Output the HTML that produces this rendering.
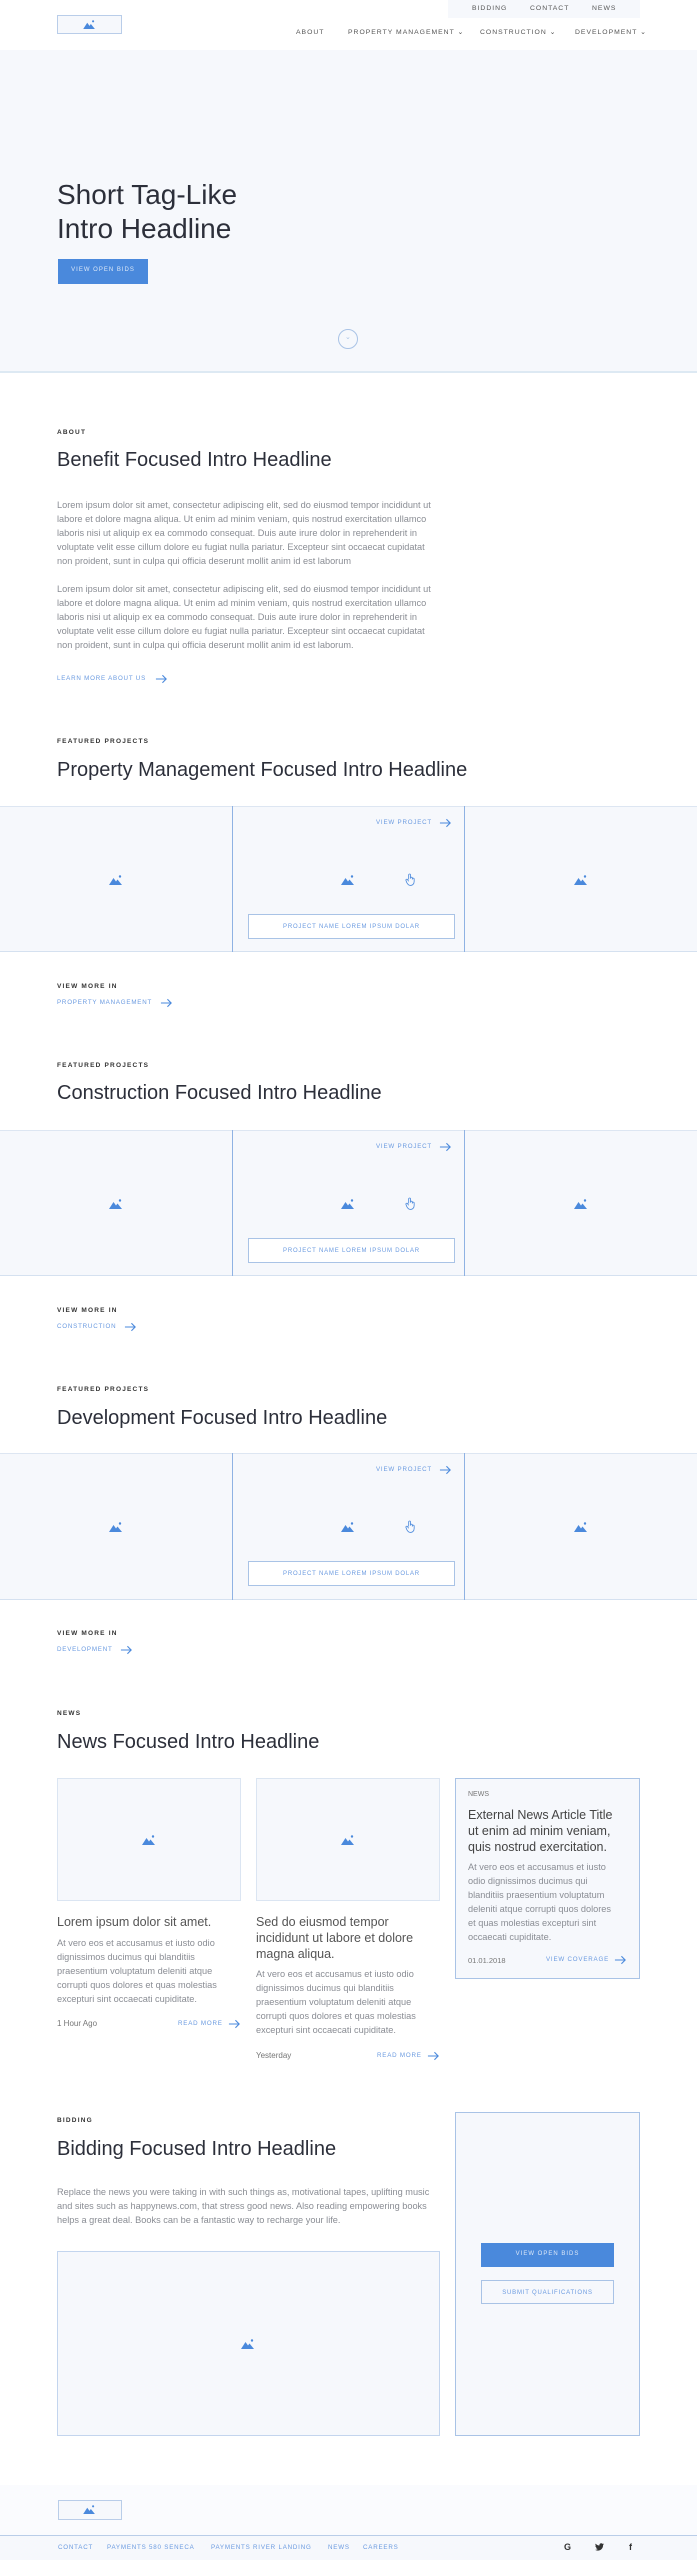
<!DOCTYPE html>
<html><head><meta charset="utf-8">
<style>
*{margin:0;padding:0;box-sizing:border-box}
html,body{width:697px;height:2560px;background:#fff;overflow:hidden}
body{position:relative;font-family:"Liberation Sans",sans-serif;color:#2c2f3a}
.a{position:absolute;white-space:nowrap}
.lbl{font-size:6.5px;letter-spacing:1.2px;font-weight:bold;color:#333;line-height:10px}
.h{font-size:20px;color:#2c2f3a;line-height:26px}
.p{font-size:9.2px;color:#8a8d94;line-height:14px}
.lk{font-size:6.2px;letter-spacing:0.8px;color:#6a9ae0;line-height:10px}
.box{position:absolute;background:#f6f8fc}
.ico{position:absolute;width:14px;height:10px}
.nav{font-size:6.8px;letter-spacing:1px;color:#555;line-height:10px}
</style></head><body>

<svg width="0" height="0" style="position:absolute">
<defs>
<symbol id="img" viewBox="0 0 14 10"><path d="M0 10 L4.5 3 L7 6.5 L8.5 4.5 L13 10 Z" fill="#4a89dc"/><circle cx="11" cy="1.5" r="1.2" fill="#4a89dc"/></symbol>
<symbol id="arr" viewBox="0 0 14 10"><path d="M1 5 H12 M8 1 L12 5 L8 9" fill="none" stroke="#4a89dc" stroke-width="1.2"/></symbol>
<symbol id="hand" viewBox="0 0 12 14"><path d="M4 7 V2 a1 1 0 0 1 2 0 V6 M6 5.5 a1 1 0 0 1 2 0 V7 M8 6.5 a1 1 0 0 1 2 0 V9 c0 3 -2 4.5 -4 4.5 c-2 0 -3 -1 -4 -3 L1 8 a1 1 0 0 1 2 -0.5 L4 9" fill="none" stroke="#4a89dc" stroke-width="0.9"/></symbol>
</defs></svg>

<!-- header -->
<div class="box" style="left:448px;top:0;width:192px;height:18px;background:#f6f8fc"></div>
<div class="a nav" style="left:472px;top:4px">BIDDING</div>
<div class="a nav" style="left:530px;top:4px">CONTACT</div>
<div class="a nav" style="left:592px;top:4px">NEWS</div>
<div class="box" style="left:57px;top:15px;width:65px;height:19px;background:#f6f8fc;border:1px solid #b9cde9"></div>
<svg class="ico" style="left:83px;top:20px;width:13px;height:9px"><use href="#img"/></svg>
<div class="a nav" style="left:296px;top:28px">ABOUT</div>
<div class="a nav" style="left:348px;top:28px">PROPERTY MANAGEMENT ⌄</div>
<div class="a nav" style="left:480px;top:28px">CONSTRUCTION ⌄</div>
<div class="a nav" style="left:575px;top:28px">DEVELOPMENT ⌄</div>

<!-- hero -->
<div class="box" style="left:0;top:50px;width:697px;height:323px;background:#f6f8fc;border-bottom:2px solid #dde9f3"></div>
<div class="a" style="left:57px;top:178px;font-size:28px;line-height:34px;color:#2c2f3a">Short Tag-Like<br>Intro Headline</div>
<div class="box" style="left:58px;top:259px;width:90px;height:25px;background:#4a89dc"></div>
<div class="a" style="left:58px;top:267px;width:90px;text-align:center;font-size:6px;letter-spacing:1px;color:#dce8f8">VIEW OPEN BIDS</div>
<div class="a" style="left:338px;top:329px;width:20px;height:20px;border:1px solid #a9c3e6;border-radius:50%"></div>
<div class="a" style="left:345px;top:333px;font-size:7px;color:#a9c3e6">⌄</div>

<!-- about -->
<div class="a lbl" style="left:57px;top:428px">ABOUT</div>
<div class="a h" style="left:57px;top:447px">Benefit Focused Intro Headline</div>
<div class="a p" style="left:57px;top:498px">Lorem ipsum dolor sit amet, consectetur adipiscing elit, sed do eiusmod tempor incididunt ut<br>labore et dolore magna aliqua. Ut enim ad minim veniam, quis nostrud exercitation ullamco<br>laboris nisi ut aliquip ex ea commodo consequat. Duis aute irure dolor in reprehenderit in<br>voluptate velit esse cillum dolore eu fugiat nulla pariatur. Excepteur sint occaecat cupidatat<br>non proident, sunt in culpa qui officia deserunt mollit anim id est laborum</div>
<div class="a p" style="left:57px;top:582px">Lorem ipsum dolor sit amet, consectetur adipiscing elit, sed do eiusmod tempor incididunt ut<br>labore et dolore magna aliqua. Ut enim ad minim veniam, quis nostrud exercitation ullamco<br>laboris nisi ut aliquip ex ea commodo consequat. Duis aute irure dolor in reprehenderit in<br>voluptate velit esse cillum dolore eu fugiat nulla pariatur. Excepteur sint occaecat cupidatat<br>non proident, sunt in culpa qui officia deserunt mollit anim id est laborum.</div>
<div class="a lk" style="left:57px;top:674px">LEARN MORE ABOUT US</div>
<svg class="ico" style="left:155px;top:674px;width:13px;height:10px"><use href="#arr"/></svg>

<!-- PM section -->
<div class="a lbl" style="left:57px;top:737px">FEATURED PROJECTS</div>
<div class="a h" style="left:57px;top:757px">Property Management Focused Intro Headline</div>
<div class="box" style="left:0;top:806px;width:697px;height:146px;border-top:1px solid #dde6f2;border-bottom:1px solid #d5e1f0"></div>
<div class="a" style="left:232px;top:806px;width:233px;height:146px;border-left:1px solid #8fb2e3;border-right:1px solid #8fb2e3"></div>
<svg class="ico" style="left:109px;top:875px"><use href="#img"/></svg>
<svg class="ico" style="left:341px;top:875px"><use href="#img"/></svg>
<svg class="ico" style="left:574px;top:875px"><use href="#img"/></svg>
<svg class="ico" style="left:405px;top:873px;width:11px;height:13px"><use href="#hand"/></svg>
<div class="a lk" style="left:376px;top:818px">VIEW PROJECT</div>
<svg class="ico" style="left:439px;top:818px;width:13px;height:10px"><use href="#arr"/></svg>
<div class="a" style="left:248px;top:914px;width:207px;height:25px;background:#fff;border:1px solid #a9c3e6"></div>
<div class="a lk" style="left:248px;top:922px;width:207px;text-align:center;font-size:6px">PROJECT NAME LOREM IPSUM DOLAR</div>
<div class="a lbl" style="left:57px;top:982px">VIEW MORE IN</div>
<div class="a lk" style="left:57px;top:998px">PROPERTY MANAGEMENT</div>
<svg class="ico" style="left:160px;top:998px;width:13px;height:10px"><use href="#arr"/></svg>

<!-- Construction -->
<div class="a lbl" style="left:57px;top:1061px">FEATURED PROJECTS</div>
<div class="a h" style="left:57px;top:1080px">Construction Focused Intro Headline</div>
<div class="box" style="left:0;top:1130px;width:697px;height:146px;border-top:1px solid #dde6f2;border-bottom:1px solid #d5e1f0"></div>
<div class="a" style="left:232px;top:1130px;width:233px;height:146px;border-left:1px solid #8fb2e3;border-right:1px solid #8fb2e3"></div>
<svg class="ico" style="left:109px;top:1199px"><use href="#img"/></svg>
<svg class="ico" style="left:341px;top:1199px"><use href="#img"/></svg>
<svg class="ico" style="left:574px;top:1199px"><use href="#img"/></svg>
<svg class="ico" style="left:405px;top:1197px;width:11px;height:13px"><use href="#hand"/></svg>
<div class="a lk" style="left:376px;top:1142px">VIEW PROJECT</div>
<svg class="ico" style="left:439px;top:1142px;width:13px;height:10px"><use href="#arr"/></svg>
<div class="a" style="left:248px;top:1238px;width:207px;height:25px;background:#fff;border:1px solid #a9c3e6"></div>
<div class="a lk" style="left:248px;top:1246px;width:207px;text-align:center;font-size:6px">PROJECT NAME LOREM IPSUM DOLAR</div>
<div class="a lbl" style="left:57px;top:1306px">VIEW MORE IN</div>
<div class="a lk" style="left:57px;top:1322px">CONSTRUCTION</div>
<svg class="ico" style="left:124px;top:1322px;width:13px;height:10px"><use href="#arr"/></svg>

<!-- Development -->
<div class="a lbl" style="left:57px;top:1385px">FEATURED PROJECTS</div>
<div class="a h" style="left:57px;top:1405px">Development Focused Intro Headline</div>
<div class="box" style="left:0;top:1453px;width:697px;height:147px;border-top:1px solid #dde6f2;border-bottom:1px solid #d5e1f0"></div>
<div class="a" style="left:232px;top:1453px;width:233px;height:147px;border-left:1px solid #8fb2e3;border-right:1px solid #8fb2e3"></div>
<svg class="ico" style="left:109px;top:1522px"><use href="#img"/></svg>
<svg class="ico" style="left:341px;top:1522px"><use href="#img"/></svg>
<svg class="ico" style="left:574px;top:1522px"><use href="#img"/></svg>
<svg class="ico" style="left:405px;top:1520px;width:11px;height:13px"><use href="#hand"/></svg>
<div class="a lk" style="left:376px;top:1465px">VIEW PROJECT</div>
<svg class="ico" style="left:439px;top:1465px;width:13px;height:10px"><use href="#arr"/></svg>
<div class="a" style="left:248px;top:1561px;width:207px;height:25px;background:#fff;border:1px solid #a9c3e6"></div>
<div class="a lk" style="left:248px;top:1569px;width:207px;text-align:center;font-size:6px">PROJECT NAME LOREM IPSUM DOLAR</div>
<div class="a lbl" style="left:57px;top:1629px">VIEW MORE IN</div>
<div class="a lk" style="left:57px;top:1645px">DEVELOPMENT</div>
<svg class="ico" style="left:120px;top:1645px;width:13px;height:10px"><use href="#arr"/></svg>

<!-- News -->
<div class="a lbl" style="left:57px;top:1709px">NEWS</div>
<div class="a h" style="left:57px;top:1729px">News Focused Intro Headline</div>
<div class="box" style="left:57px;top:1778px;width:184px;height:123px;border:1px solid #dbe5f2"></div>
<div class="box" style="left:256px;top:1778px;width:184px;height:123px;border:1px solid #dbe5f2"></div>
<svg class="ico" style="left:142px;top:1835px"><use href="#img"/></svg>
<svg class="ico" style="left:341px;top:1835px"><use href="#img"/></svg>
<div class="a" style="left:57px;top:1914px;font-size:12.5px;line-height:16px;color:#555">Lorem ipsum dolor sit amet.</div>
<div class="a p" style="left:57px;top:1936px">At vero eos et accusamus et iusto odio<br>dignissimos ducimus qui blanditiis<br>praesentium voluptatum deleniti atque<br>corrupti quos dolores et quas molestias<br>excepturi sint occaecati cupiditate.</div>
<div class="a" style="left:57px;top:2019px;font-size:8px;color:#777">1 Hour Ago</div>
<div class="a lk" style="left:178px;top:2019px">READ MORE</div>
<svg class="ico" style="left:228px;top:2019px;width:13px;height:10px"><use href="#arr"/></svg>

<div class="a" style="left:256px;top:1914px;font-size:12.5px;line-height:16px;color:#555">Sed do eiusmod tempor<br>incididunt ut labore et dolore<br>magna aliqua.</div>
<div class="a p" style="left:256px;top:1967px">At vero eos et accusamus et iusto odio<br>dignissimos ducimus qui blanditiis<br>praesentium voluptatum deleniti atque<br>corrupti quos dolores et quas molestias<br>excepturi sint occaecati cupiditate.</div>
<div class="a" style="left:256px;top:2051px;font-size:8px;color:#777">Yesterday</div>
<div class="a lk" style="left:377px;top:2051px">READ MORE</div>
<svg class="ico" style="left:427px;top:2051px;width:13px;height:10px"><use href="#arr"/></svg>

<div class="box" style="left:455px;top:1778px;width:185px;height:201px;border:1px solid #a9c3e6"></div>
<div class="a" style="left:468px;top:1791px;font-size:7px;color:#777">NEWS</div>
<div class="a" style="left:468px;top:1807px;font-size:12.5px;line-height:16px;color:#444">External News Article Title<br>ut enim ad minim veniam,<br>quis nostrud exercitation.</div>
<div class="a p" style="left:468px;top:1860px">At vero eos et accusamus et iusto<br>odio dignissimos ducimus qui<br>blanditiis praesentium voluptatum<br>deleniti atque corrupti quos dolores<br>et quas molestias excepturi sint<br>occaecati cupiditate.</div>
<div class="a" style="left:468px;top:1956px;font-size:7.5px;color:#777">01.01.2018</div>
<div class="a lk" style="left:546px;top:1955px">VIEW COVERAGE</div>
<svg class="ico" style="left:614px;top:1955px;width:13px;height:10px"><use href="#arr"/></svg>

<!-- Bidding -->
<div class="box" style="left:455px;top:2112px;width:185px;height:324px;border:1px solid #a9c3e6"></div>
<div class="a lbl" style="left:57px;top:2116px">BIDDING</div>
<div class="a h" style="left:57px;top:2136px">Bidding Focused Intro Headline</div>
<div class="a p" style="left:57px;top:2185px">Replace the news you were taking in with such things as, motivational tapes, uplifting music<br>and sites such as happynews.com, that stress good news. Also reading empowering books<br>helps a great deal. Books can be a fantastic way to recharge your life.</div>
<div class="box" style="left:57px;top:2251px;width:383px;height:185px;border:1px solid #c3d5ee"></div>
<svg class="ico" style="left:241px;top:2339px"><use href="#img"/></svg>
<div class="box" style="left:481px;top:2243px;width:133px;height:24px;background:#4a89dc"></div>
<div class="a" style="left:481px;top:2251px;width:133px;text-align:center;font-size:6px;letter-spacing:1px;color:#dce8f8">VIEW OPEN BIDS</div>
<div class="a" style="left:481px;top:2280px;width:133px;height:24px;border:1px solid #a9c3e6;background:#f6f8fc"></div>
<div class="a lk" style="left:481px;top:2288px;width:133px;text-align:center;font-size:6px">SUBMIT QUALIFICATIONS</div>

<!-- footer -->
<div class="box" style="left:0;top:2485px;width:697px;height:75px;background:#fafbfe"></div>
<div class="box" style="left:58px;top:2500px;width:64px;height:20px;background:#f6f8fc;border:1px solid #b9cde9"></div>
<svg class="ico" style="left:83px;top:2505px;width:13px;height:9px"><use href="#img"/></svg>
<div class="box" style="left:0;top:2535px;width:697px;height:25px;background:#f6f8fc;border-top:1px solid #b9cde9"></div>
<div class="a lk" style="left:58px;top:2543px">CONTACT</div>
<div class="a lk" style="left:107px;top:2543px">PAYMENTS 580 SENECA</div>
<div class="a lk" style="left:211px;top:2543px">PAYMENTS RIVER LANDING</div>
<div class="a lk" style="left:328px;top:2543px">NEWS</div>
<div class="a lk" style="left:363px;top:2543px">CAREERS</div>
<div class="a" style="left:564px;top:2542px;font-size:9px;font-weight:bold;color:#333">G</div>
<svg class="a" style="left:595px;top:2543px" width="9" height="8" viewBox="0 0 24 20"><path d="M24 2.4c-.9.4-1.8.7-2.8.8 1-.6 1.8-1.6 2.2-2.7-1 .6-2 1-3.1 1.2C19.3.7 18 .1 16.6.1c-2.7 0-4.9 2.2-4.9 4.9 0 .4 0 .8.1 1.1C7.7 5.9 4.1 4 1.7 1 1.200 1.8 1 2.6 1 3.5c0 1.7.9 3.2 2.2 4.1-.8 0-1.600-.2-2.2-.6v.1c0 2.4 1.7 4.4 3.9 4.8-.4.1-.8.2-1.3.2-.3 0-.6 0-.9-.1.6 2 2.4 3.4 4.6 3.4-1.7 1.3-3.8 2.1-6.1 2.1-.4 0-.8 0-1.2-.1 2.2 1.4 4.8 2.2 7.5 2.2 9.1 0 14-7.5 14-14v-.6c1-.7 1.8-1.600 2.5-2.6z" fill="#333"/></svg>
<div class="a" style="left:629px;top:2542px;font-size:9px;font-weight:bold;color:#333">f</div>
</body></html>
